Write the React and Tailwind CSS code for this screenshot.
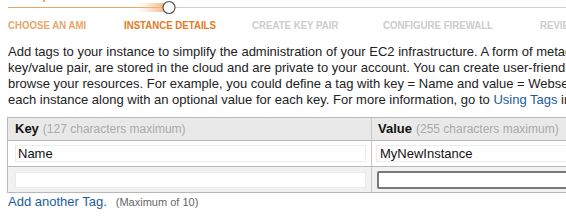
import React from 'react';

// each step sits in a fixed-width slot so the labels start where the wizard puts them
const steps = [
  { label: 'CHOOSE AN AMI', cls: 'text-[#e8a66a]', w: 'w-[116px]' },
  { label: 'INSTANCE DETAILS', cls: 'text-[#e07b22]', w: 'w-[128px]' },
  { label: 'CREATE KEY PAIR', cls: 'text-[#cccccc]', w: 'w-[131px]' },
  { label: 'CONFIGURE FIREWALL', cls: 'text-[#cccccc]', w: 'w-[157px]' },
  { label: 'REVIEW', cls: 'text-[#cccccc]', w: 'w-[60px]' },
];

const WizardBar = () => (
  <svg width="566" height="16" className="block">
    <defs>
      <linearGradient id="glow" x1="0" x2="1" y1="0" y2="0">
        <stop offset="0" stopColor="#f5c89a" stopOpacity="0" />
        <stop offset="1" stopColor="#f3b27a" stopOpacity="0.9" />
      </linearGradient>
    </defs>
    <rect x="43" y="0" width="2" height="2" fill="#e8a66a" />
    <line x1="8" y1="7.5" x2="163" y2="7.5" stroke="#e8a66a" strokeWidth="1" />
    <rect x="138" y="3" width="26" height="9" fill="url(#glow)" />
    <line x1="175" y1="7.5" x2="566" y2="7.5" stroke="#cfcfcf" strokeWidth="1" />
    <circle cx="169" cy="7.5" r="6" fill="#fff" stroke="#555" strokeWidth="1.2" />
  </svg>
);

export default function App() {
  return (
    <div className="w-[566px] h-[219px] overflow-hidden bg-white font-['Liberation_Sans',Arial,sans-serif] text-[#222]">
      <WizardBar />
      <div className="flex whitespace-nowrap mt-[2px] pl-[8px] font-bold text-[11.5px] leading-[14px]">
        {steps.map((s) => (
          <div key={s.label} className={`shrink-0 ${s.w}`}>
            <span className={`inline-block origin-left scale-x-[0.84] ${s.cls}`}>{s.label}</span>
          </div>
        ))}
      </div>

      <div className="mt-[12px] pl-[8px] text-[13px] leading-[16px] whitespace-nowrap overflow-hidden">
        <div>Add tags to your instance to simplify the administration of your EC2 infrastructure. A form of metadata, tags consist of a case-sensitive</div>
        <div>key/value pair, are stored in the cloud and are private to your account. You can create user-friendly names that help you organize, search, and</div>
        <div>browse your resources. For example, you could define a tag with key = Name and value = Webserver. You can add up to ten unique keys to</div>
        <div>
          each instance along with an optional value for each key. For more information, go to{' '}
          <span className="text-[#1c5d9c]">Using Tags</span> in the Amazon EC2 User Guide.
        </div>
      </div>

      <div className="mt-[9px] ml-[7px] w-[600px] border border-[#b8b8b8] text-[13px]">
        <div className="flex h-[23px] bg-[#e9e9e9] border-b border-[#b8b8b8] items-center">
          <div className="w-[364px] pl-[7px] border-r border-[#c8c8c8] h-full flex items-center">
            <span className="font-bold text-[#111]">Key</span>
            <span className="ml-[4px] text-[12px] text-[#aaaaaa]">(127 characters maximum)</span>
          </div>
          <div className="pl-[6px] flex items-center">
            <span className="font-bold text-[#111]">Value</span>
            <span className="ml-[4px] text-[12px] text-[#aaaaaa]">(255 characters maximum)</span>
          </div>
        </div>
        <div className="flex h-[26px] bg-white border-b border-[#b8b8b8]">
          <div className="w-[364px] border-r border-[#c8c8c8] flex items-center pl-[7px] pr-[5px]">
            <div className="w-full h-[17px] border border-[#ececec] bg-white pl-[2px] leading-[15px] text-[#111]">Name</div>
          </div>
          <div className="flex-1 flex items-center pl-[4px]">
            <div className="w-full h-[17px] border border-[#ececec] bg-white pl-[3px] leading-[15px] text-[#111]">MyNewInstance</div>
          </div>
        </div>
        <div className="flex h-[25px] bg-[#f1f1f1]">
          <div className="w-[364px] border-r border-[#c8c8c8] flex items-center pl-[7px] pr-[5px]">
            <div className="w-full h-[16px] bg-white border border-[#ececec]"></div>
          </div>
          <div className="flex-1 flex items-center pl-[5px]">
            <div className="w-full h-[18px] bg-white border-2 border-[#7a7a7a] rounded-[2px]"></div>
          </div>
        </div>
      </div>

      <div className="flex items-baseline pl-[8px] mt-[1px] leading-[16px]">
        <span className="text-[13px] text-[#1c5d9c]">Add another Tag.</span>
        <span className="ml-[9px] text-[11px] text-[#666]">(Maximum of 10)</span>
      </div>
    </div>
  );
}
